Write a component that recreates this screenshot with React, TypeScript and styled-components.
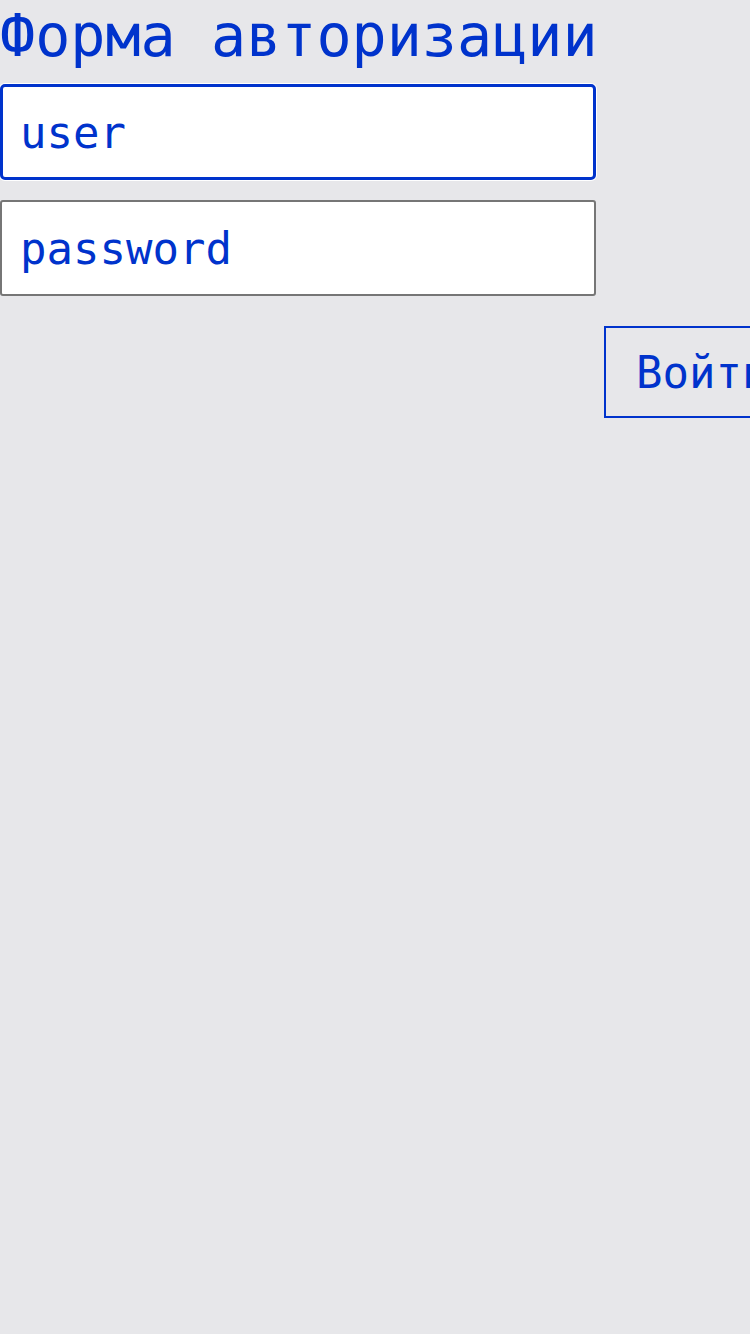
import React from "react";
import styled, { createGlobalStyle } from "styled-components";

const Global = createGlobalStyle`
  html, body {
    margin: 0;
    padding: 0;
    background: #e7e7ea;
    overflow: hidden;
  }
  body {
    font-family: "DejaVu Sans Mono", "Liberation Mono", monospace;
    color: #0033cc;
  }
`;

const Form = styled.form`
  display: grid;
  grid-template-columns: 596px max-content;
  column-gap: 8px;
  align-items: start;
  width: 900px;
`;

const Title = styled.h1`
  grid-column: 1 / -1;
  margin: 0 0 14px;
  padding-top: 2px;
  font-size: 58.4px;
  line-height: 68px;
  font-weight: 400;
  color: #0033cc;
  white-space: nowrap;
`;

const Field = styled.input<{ $focused?: boolean }>`
  grid-column: 1;
  box-sizing: border-box;
  width: 596px;
  height: 96px;
  margin: 0 0 ${(p) => (p.$focused ? "20px" : "30px")};
  padding: 0 0 0 ${(p) => (p.$focused ? "17px" : "18px")};
  background: #ffffff;
  border: ${(p) => (p.$focused ? "3px solid #0033cc" : "2px solid #767676")};
  border-radius: ${(p) => (p.$focused ? "5px" : "3px")};
  box-shadow: ${(p) => (p.$focused ? "0 0 0 1px #ffffff" : "none")};
  outline: none;
  font-family: "DejaVu Sans Mono", "Liberation Mono", monospace;
  font-size: 44px;
  color: #0033cc;
`;

const Submit = styled.button`
  grid-column: 2;
  grid-row: 4;
  box-sizing: border-box;
  height: 92px;
  padding: 0 30px;
  background: transparent;
  border: 2px solid #0033cc;
  border-radius: 0;
  font-family: "DejaVu Sans Mono", "Liberation Mono", monospace;
  font-size: 44px;
  color: #0033cc;
  white-space: nowrap;
`;

export default function App() {
  return (
    <>
      <Global />
      <Form onSubmit={(e) => e.preventDefault()}>
        <Title>Форма авторизации</Title>
        <Field $focused type="text" defaultValue="user" />
        <Field type="text" defaultValue="password" />
        <Submit type="submit">Войти</Submit>
      </Form>
    </>
  );
}
